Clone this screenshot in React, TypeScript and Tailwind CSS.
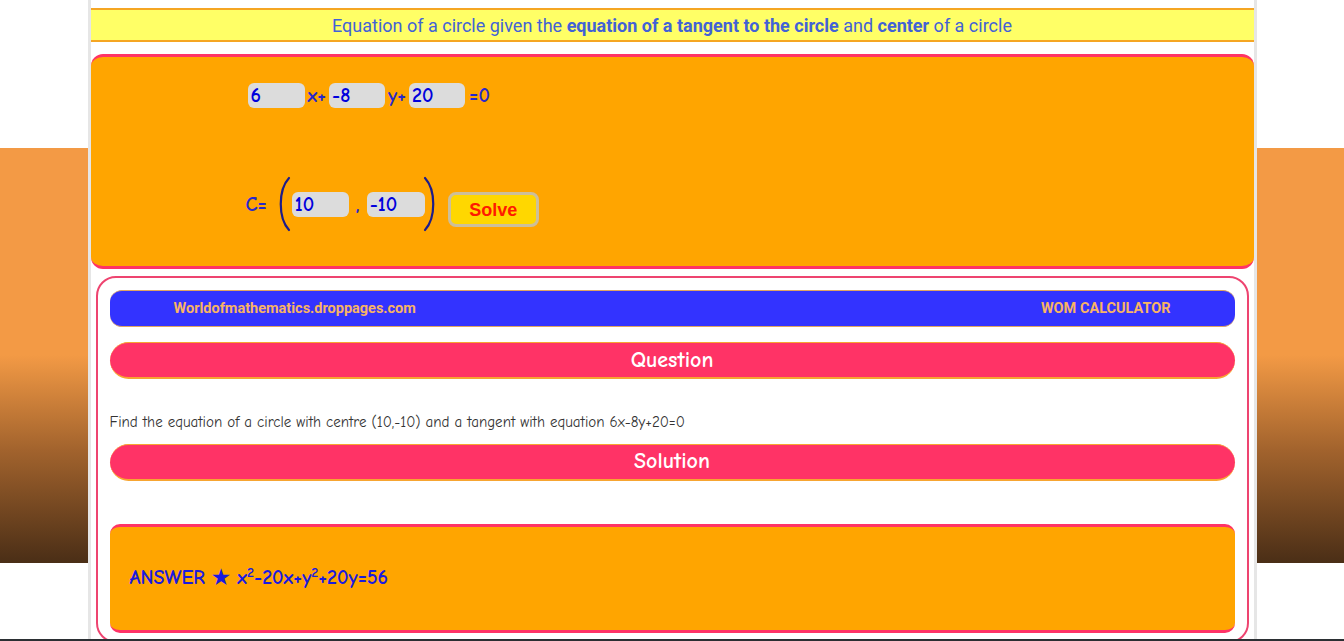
import React from 'react'

const comic = "font-['Comic_Sans_MS','Comic_Neue','Noto_Sans',sans-serif]"

const Field = ({ value, width = 'w-[57px]' }: { value: string; width?: string }) => (
    <div className={`${width} h-[25px] bg-[#dcdcdc] rounded-[6px] px-[3px] flex items-center text-[20px] leading-[25px] font-bold text-[#0000dd] ${comic}`}>
        {value}
    </div>
)

const Paren = ({ right }: { right?: boolean }) => (
    <svg width="16" height="56" viewBox="0 0 16 56" className="shrink-0">
        <path
            d={right ? 'M3 2 C14 14 14 42 3 54' : 'M13 2 C2 14 2 42 13 54'}
            fill="none"
            stroke="#1c1c8a"
            strokeWidth="2.2"
            strokeLinecap="round"
        />
    </svg>
)

const Heading = ({ label }: { label: string }) => (
    <div className={`h-[37px] rounded-full bg-[#ff3366] border-t border-b-2 border-[#f7a531] flex items-center justify-center text-white text-[22px] font-bold ${comic}`}>
        {label}
    </div>
)

export default function App() {
    return (
        <div className="min-h-screen bg-[linear-gradient(to_bottom,#ffffff_148px,#f39a45_148px,#f39a45_355px,#a2632d_450px,#4a2e16_563px,#ffffff_563px)]">
            <div className="w-[1169px] mx-auto min-h-[641px] bg-white border-x-[3px] border-[#e6e6e6] pt-[8px]">
                {/* title */}
                <div className="h-[34px] bg-[#ffff66] border-y-2 border-[#f5a623] flex items-center justify-center text-[18px] text-[#4262d6] font-['Roboto',sans-serif]">
                    <span>
                        Equation of a circle given the <b className="font-bold">equation of a tangent to the circle</b> and{' '}
                        <b className="font-bold">center</b> of a circle
                    </span>
                </div>

                {/* input panel */}
                <div className="mt-[12px] h-[215px] bg-[#ffa500] border-y-[3px] border-[#ff3366] rounded-[12px] pl-[157px] pt-[26px]">
                    <div className={`h-[25px] flex items-center gap-[1px] text-[20px] leading-[25px] font-bold text-[#2828cc] ${comic}`}>
                        <Field value="6" />
                        <span className="ml-[2px] mr-[2px]">x+</span>
                        <Field value="-8" width="w-[56px]" />
                        <span className="ml-[2px] mr-[2px]">y+</span>
                        <Field value="20" width="w-[56px]" />
                        <span className="ml-[3px]">=0</span>
                    </div>
                    <div className={`mt-[68px] h-[56px] flex items-center text-[20px] leading-[25px] font-bold text-[#2828cc] ${comic}`}>
                        <span className="-ml-[2px] mr-[9px]">C=</span>
                        <Paren />
                        <Field value="10" />
                        <span className="mx-[7px]">,</span>
                        <Field value="-10" width="w-[58px]" />
                        <div className="-ml-[3px]">
                            <Paren right />
                        </div>
                        <button className="ml-[10px] mt-[11px] w-[91px] h-[35px] bg-[#ffd700] border-[3px] border-[#cdbf9a] rounded-[8px] text-[#ff1a00] text-[18px] leading-none font-bold font-['Liberation_Sans',Arial,sans-serif]">
                            Solve
                        </button>
                    </div>
                </div>

                {/* result card */}
                <div className="mt-[7px] mx-[5px] border-2 border-[#ee4470] rounded-[20px] px-[12px] pt-[12px] pb-[8px]">
                    <div className="h-[37px] bg-[#3333ff] border-y border-[#e0a463] rounded-[12px] px-[64px] flex items-center justify-between text-[14.5px] font-bold text-[#f8b464] font-['Roboto',sans-serif]">
                        <span>Worldofmathematics.droppages.com</span>
                        <span>WOM CALCULATOR</span>
                    </div>

                    <div className="mt-[15px]">
                        <Heading label="Question" />
                    </div>

                    <p className={`mt-[32px] text-[15px] text-[#333333] ${comic}`}>
                        Find the equation of a circle with centre (10,-10) and a tangent with equation 6x-8y+20=0
                    </p>

                    <div className="mt-[10px]">
                        <Heading label="Solution" />
                    </div>

                    <div className="mt-[43px] h-[109px] bg-[#ffa500] border-y-[3px] border-[#ff3366] rounded-[10px] pl-[20px] flex items-center">
                        <span className={`text-[20px] font-bold text-[#1a1ae0] ${comic}`}>
                            ANSWER ★ x<sup className="text-[14px]">2</sup>-20x+y<sup className="text-[14px]">2</sup>+20y=56
                        </span>
                    </div>
                </div>
            </div>
            <div className="fixed bottom-0 left-0 right-0 h-[2px] bg-[#2b2f33]" />
        </div>
    )
}
